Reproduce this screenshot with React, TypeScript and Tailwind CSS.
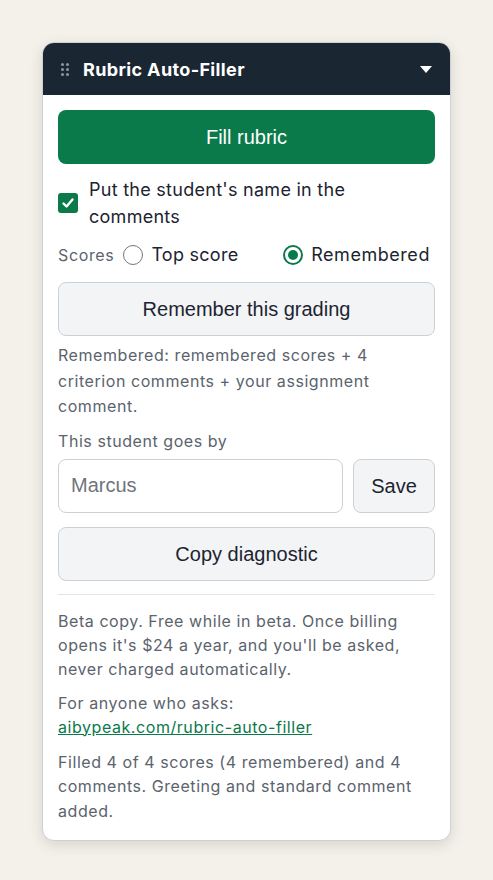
import { useState } from "react";

const btnFont = { fontFamily: '"Liberation Sans", Arial, sans-serif' };

export default function App() {
  const [useName, setUseName] = useState(true);
  const [mode, setMode] = useState<"top" | "remembered">("remembered");
  const [name, setName] = useState("");

  return (
    <div
      className="min-h-[880px] bg-[#f4f1ea] pt-[42px] pl-[42px]"
      style={{ fontFamily: 'Inter, "Noto Sans", sans-serif' }}
    >
      <div className="w-[409px] overflow-hidden rounded-[12px] border border-[#ccd1d6] bg-white shadow-[0_4px_14px_rgba(0,0,0,0.12)]">
        {/* header */}
        <div className="flex h-[52px] items-center bg-[#1b2633] pl-[18px] pr-[18px]">
          <div className="grid grid-cols-2 gap-x-[2px] gap-y-[2px]">
            {Array.from({ length: 6 }).map((_, i) => (
              <span key={i} className="h-[3px] w-[3px] rounded-full bg-[#8b95a1]" />
            ))}
          </div>
          <div className="ml-[14px] flex-1 text-[18px] font-bold tracking-[0.02em] text-white">
            Rubric Auto-Filler
          </div>
          <svg width="12" height="7" viewBox="0 0 12 7">
            <path d="M0 0h12L6 7z" fill="#fff" />
          </svg>
        </div>

        {/* body */}
        <div className="px-[15px] pt-[15px] pb-[17px] tracking-[0.035em]">
          <button
            className="h-[54px] w-full rounded-[8px] bg-[#0b7a4b] text-[20px] tracking-normal text-white"
            style={btnFont}
          >
            Fill rubric
          </button>

          <label className="mt-[12px] flex items-center gap-[11px] pr-[24px] text-[18px] leading-[27px] tracking-[0.015em] text-[#1c2430]">
            <span
              onClick={() => setUseName(!useName)}
              className="flex h-[20px] w-[20px] shrink-0 items-center justify-center rounded-[3px] bg-[#0b7a4b]"
            >
              {useName && (
                <svg width="14" height="14" viewBox="0 0 14 14">
                  <path d="M2.5 7.5l3 3 6-7" fill="none" stroke="#fff" strokeWidth="2.4" strokeLinecap="round" strokeLinejoin="round" />
                </svg>
              )}
            </span>
            <span>Put the student's name in the comments</span>
          </label>

          <div className="mt-[13px] flex items-center text-[18px] leading-[24px] tracking-[0.015em] text-[#1c2430]">
            <span className="mr-[9px] text-[16px] tracking-[0.04em] text-[#5b636d]">Scores</span>
            <label className="flex flex-1 items-center gap-[8px]" onClick={() => setMode("top")}>
              <Radio on={mode === "top"} />
              <span>Top score</span>
            </label>
            <label className="flex flex-1 items-center gap-[8px] pl-[8px]" onClick={() => setMode("remembered")}>
              <Radio on={mode === "remembered"} />
              <span className="tracking-[0.03em]">Remembered</span>
            </label>
          </div>

          <button
            className="mt-[15px] h-[54px] w-full rounded-[8px] border border-[#ccd1d6] bg-[#f3f4f6] text-[20px] tracking-normal text-[#1c2430]"
            style={btnFont}
          >
            Remember this grading
          </button>

          <p className="mt-[7px] text-[16px] leading-[25.5px] text-[#5b636d]">
            Remembered: remembered scores + 4 criterion comments + your assignment comment.
          </p>

          <div className="mt-[9px] text-[16px] leading-[24px] text-[#5b636d]">This student goes by</div>

          <div className="mt-[6px] flex gap-[10px] tracking-normal">
            <input
              value={name}
              onChange={(e) => setName(e.target.value)}
              placeholder="Marcus"
              className="h-[54px] min-w-0 flex-1 rounded-[8px] border border-[#ccd1d6] bg-white px-[12px] text-[20px] text-[#1c2430] outline-none placeholder:text-[#6f757c]"
              style={btnFont}
            />
            <button
              className="h-[54px] w-[82px] rounded-[8px] border border-[#ccd1d6] bg-[#f3f4f6] text-[20px] text-[#1c2430]"
              style={btnFont}
            >
              Save
            </button>
          </div>

          <button
            className="mt-[14px] h-[54px] w-full rounded-[8px] border border-[#ccd1d6] bg-[#f3f4f6] text-[20px] tracking-normal text-[#1c2430]"
            style={btnFont}
          >
            Copy diagnostic
          </button>

          <div className="mt-[13px] h-px bg-[#e1e4e8]" />

          <p className="mt-[14px] text-[16px] leading-[24px] text-[#5b636d]">
            Beta copy. Free while in beta. Once billing opens it's $24 a year, and you'll be asked, never charged automatically.
          </p>

          <p className="mt-[10px] text-[16px] leading-[24px] text-[#5b636d]">
            For anyone who asks:
            <br />
            <a href="#" className="text-[#0b7a4b] underline">
              aibypeak.com/rubric-auto-filler
            </a>
          </p>

          <p className="mt-[11px] text-[16px] leading-[24.5px] text-[#5b636d]">
            Filled 4 of 4 scores (4 remembered) and 4 comments. Greeting and standard comment added.
          </p>
        </div>
      </div>
    </div>
  );
}

function Radio({ on }: { on: boolean }) {
  return (
    <span
      className={
        on
          ? "flex h-[20px] w-[20px] items-center justify-center rounded-full border-2 border-[#0b7a4b]"
          : "flex h-[20px] w-[20px] items-center justify-center rounded-full border-[1.5px] border-[#767676]"
      }
    >
      {on && <span className="h-[10px] w-[10px] rounded-full bg-[#0b7a4b]" />}
    </span>
  );
}
